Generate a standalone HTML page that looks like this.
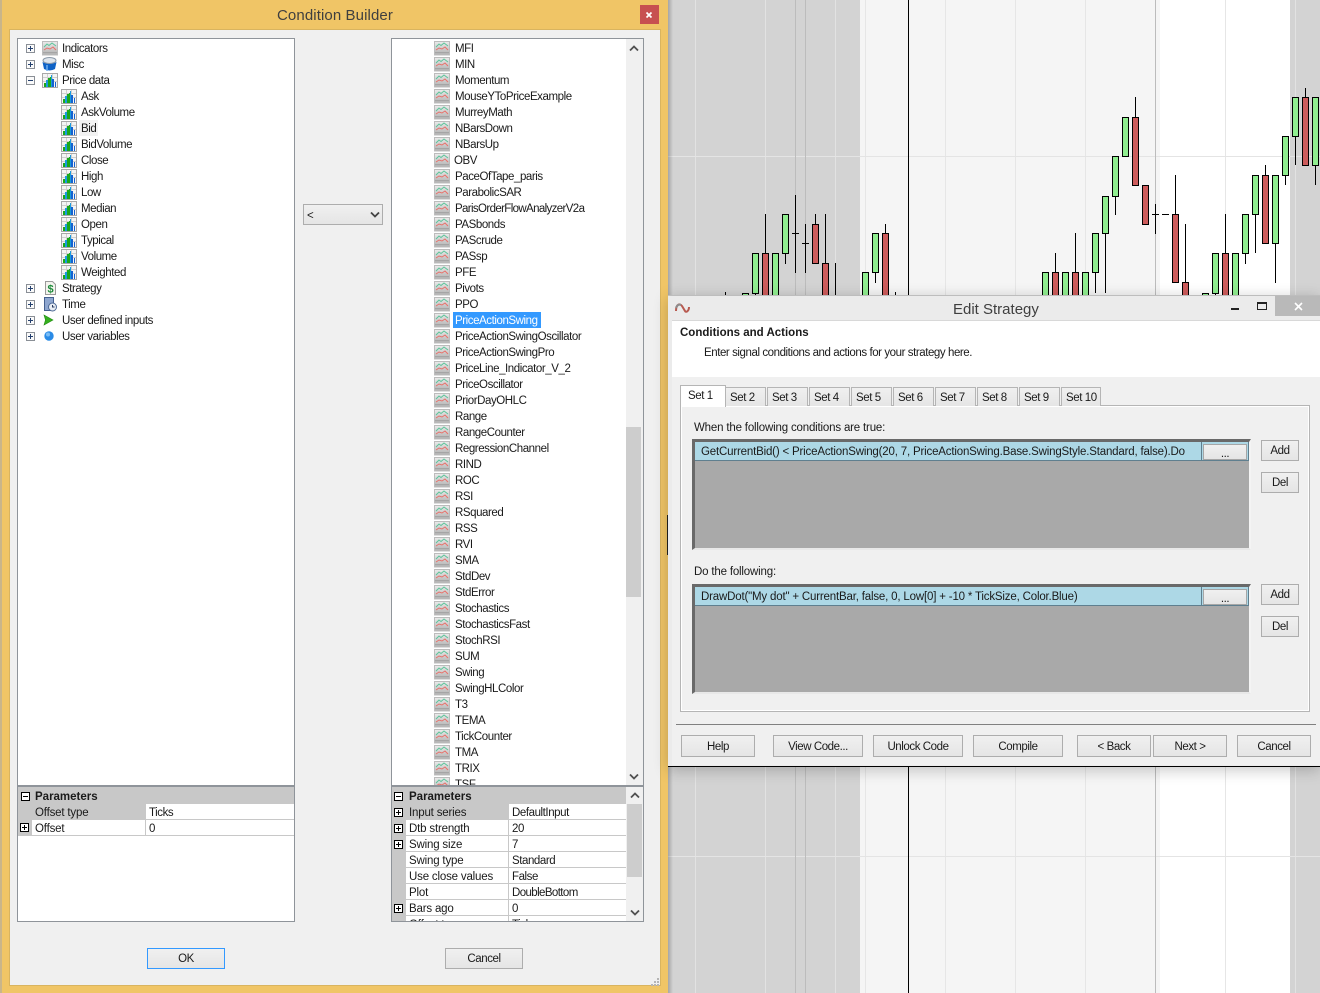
<!DOCTYPE html>
<html><head><meta charset="utf-8"><title>Condition Builder</title>
<style>
html,body{margin:0;padding:0;width:1320px;height:993px;overflow:hidden;background:#f5f5f5}
*{box-sizing:border-box}
body{font:11.5px/16px "Liberation Sans",sans-serif;letter-spacing:-.43px;color:#1a1a1a;position:relative}
.a{position:absolute}
.t{position:absolute;white-space:nowrap;line-height:16px;height:16px;margin-top:1px}
.p{letter-spacing:-.18px}
.box{position:absolute;background:#fff;border:1px solid #8f949a}
.btn{position:absolute;border:1px solid #adadad;background:linear-gradient(#f0f0f0,#e5e5e5);text-align:center;line-height:23px;height:22px}
.btn.s{line-height:20px}
.tab{position:absolute;top:387px;height:19px;width:41px;border:1px solid #b5b5b5;border-bottom:0;background:linear-gradient(#f0f0f0,#e5e5e5);text-align:left;padding-left:4px;line-height:20px}
.gutter{position:absolute;background:#c8c8c8}
.b{font-weight:700;letter-spacing:0}
.l{position:absolute;background:#c8c8c8}
.sb{position:absolute;background:#f0f0f0}
svg{position:absolute;display:block;overflow:visible}
.sunk{position:absolute;background:#a9a9a9;border-top:3px solid #696969;border-left:3px solid #696969;border-right:2px solid #f4f4f4;border-bottom:2px solid #e8e8e8}
.crow{position:absolute;left:695px;width:554px;background:#add8e6;border-bottom:1px solid #5f7f8f;border-right:1px solid #5f7f8f}
.dots{position:absolute;left:1203px;width:44px;height:16px;border:1px solid #a6a6a6;background:linear-gradient(#f0f0f0,#e5e5e5);text-align:center;line-height:19px}
</style></head>
<body>
<svg width="0" height="0" style="position:absolute">
<defs>
<symbol id="plus" viewBox="0 0 9 9"><rect x=".5" y=".5" width="8" height="8" fill="#fafafa" stroke="#8a8f96"/><path d="M2 4.5h5M4.5 2v5" stroke="#24406e"/></symbol>
<symbol id="minus" viewBox="0 0 9 9"><rect x=".5" y=".5" width="8" height="8" fill="#fafafa" stroke="#8a8f96"/><path d="M2 4.5h5" stroke="#24406e"/></symbol>
<symbol id="bp" viewBox="0 0 9 9"><rect x=".5" y=".5" width="8" height="8" fill="#fff" stroke="#000"/><path d="M2 4.5h5M4.5 2v5" stroke="#000"/></symbol>
<symbol id="bm" viewBox="0 0 9 9"><rect x=".5" y=".5" width="8" height="8" fill="#fff" stroke="#000"/><path d="M2 4.5h5" stroke="#000"/></symbol>
<linearGradient id="ig" x1="0" y1="0" x2="0" y2="1"><stop offset="0" stop-color="#ececec"/><stop offset="1" stop-color="#b0b0b0"/></linearGradient>
<g id="ind"><rect x=".5" y="1.5" width="15" height="13.5" fill="url(#ig)" stroke="#bcbcbc"/><path d="M1 12.5h14" stroke="#a5a5a5"/><path d="M2 7l3-3 2 1.5 3-2.5 4 3" fill="none" stroke="#5cc49a"/><path d="M2 10l3-2 3 1 3-2 3 3" fill="none" stroke="#e8706a"/></g>
<g id="pri"><rect x=".5" y="1.5" width="15" height="14" fill="#f4f4f4" stroke="#a8a8a8"/><path d="M1 5.5h14M1 9.5h14M5.5 2v13M10.5 2v13" stroke="#cfcfcf"/><path d="M2 15v-4h2v4zM6 15V6h2v9z" fill="#1aa81a"/><path d="M4 15V8h2v7zM9 15V3h1v12z" fill="#1a9ae0"/><path d="M8 15V5h1v10z" fill="#1aa81a"/><path d="M10 15V7h2v8zM13 15v-5h1v5z" fill="#1662d0"/></g>
<pattern id="pind" x="0" y="0" width="16" height="16" patternUnits="userSpaceOnUse"><use href="#ind"/></pattern>
<pattern id="ppri" x="0" y="0" width="16" height="16" patternUnits="userSpaceOnUse"><use href="#pri"/></pattern>
</defs>
</svg>

<!-- CHART -->
<div class="a" style="left:668px;top:0;width:652px;height:993px;background:#f5f5f5"></div>
<svg style="left:0;top:0" width="1320" height="993" shape-rendering="crispEdges">
<rect x="668" y="0" width="192" height="993" fill="#d3d3d3"/>
<rect x="1160" y="0" width="130" height="993" fill="#fff"/>
<rect x="1290" y="0" width="30" height="993" fill="#d3d3d3"/>
<path d="M695.5 0V993M765.5 0V993M835.5 0V993M1295.5 0V993" stroke="#e2e2e2"/>
<path d="M865.5 0V993M945.5 0V993M1015.5 0V993M1085.5 0V993M1225.5 0V993" stroke="#e6e6e6"/>
<path d="M668 156.5H1320M668 856.5H1320" stroke="#e4e4e4"/>
<path d="M795.5 0V993M805.5 0V993M1155.5 0V993" stroke="#bcbcbc"/>
<path d="M908.5 0V993" stroke="#000"/>
<path stroke="#000" fill="none" d="M725.5 292V300M755.5 293V296M765.5 214V253M785.5 253V264M795.5 195V273M792 233.5H799M805.5 224V273M802 243.5H809M815.5 214V224M825.5 214V263M835.5 263V300M875.5 272V283M885.5 224V233M895.5 292V300M1055.5 253V272M1075.5 233V272M1095.5 272V293M1105.5 233V293M1115.5 196V215M1135.5 97V117M1155.5 204V234M1152 214.5H1159M1162 214.5H1169M1175.5 175V214M1185.5 224V282M1215.5 293V296M1225.5 214V253M1245.5 253V264M1255.5 214V253M1265.5 165V175M1275.5 243V283M1285.5 175V185M1295.5 136V165M1305.5 88V97M1315.5 165V185"/>
<g fill="#90ee90" stroke="#000">
<rect x="742.5" y="293.5" width="6" height="7"/><rect x="752.5" y="253.5" width="6" height="40"/><rect x="772.5" y="253.5" width="6" height="47"/><rect x="782.5" y="214.5" width="6" height="39"/><rect x="862.5" y="272.5" width="6" height="28"/><rect x="872.5" y="233.5" width="6" height="39"/><rect x="1042.5" y="272.5" width="6" height="28"/><rect x="1062.5" y="272.5" width="6" height="28"/><rect x="1082.5" y="272.5" width="6" height="28"/><rect x="1092.5" y="233.5" width="6" height="39"/><rect x="1102.5" y="196.5" width="6" height="37"/><rect x="1112.5" y="156.5" width="6" height="40"/><rect x="1122.5" y="117.5" width="6" height="39"/><rect x="1202.5" y="293.5" width="6" height="7"/><rect x="1212.5" y="253.5" width="6" height="40"/><rect x="1232.5" y="253.5" width="6" height="47"/><rect x="1242.5" y="214.5" width="6" height="39"/><rect x="1252.5" y="175.5" width="6" height="39"/><rect x="1272.5" y="175.5" width="6" height="68"/><rect x="1282.5" y="136.5" width="6" height="39"/><rect x="1292.5" y="97.5" width="6" height="39"/><rect x="1312.5" y="97.5" width="6" height="68"/>
</g>
<g fill="#cd5c5c" stroke="#000">
<rect x="762.5" y="253.5" width="6" height="47"/><rect x="812.5" y="224.5" width="6" height="39"/><rect x="822.5" y="263.5" width="6" height="37"/><rect x="882.5" y="233.5" width="6" height="67"/><rect x="1052.5" y="272.5" width="6" height="28"/><rect x="1072.5" y="272.5" width="6" height="28"/><rect x="1132.5" y="117.5" width="6" height="68"/><rect x="1142.5" y="185.5" width="6" height="39"/><rect x="1172.5" y="214.5" width="6" height="68"/><rect x="1182.5" y="282.5" width="6" height="18"/><rect x="1222.5" y="253.5" width="6" height="47"/><rect x="1262.5" y="175.5" width="6" height="68"/><rect x="1302.5" y="97.5" width="6" height="68"/>
</g>
</svg>
<div class="a" style="left:668px;top:0;width:5px;height:993px;background:linear-gradient(90deg,rgba(0,0,0,.22),rgba(0,0,0,0))"></div>

<!-- CONDITION BUILDER -->
<div class="a" style="left:0;top:0;width:668px;height:993px;background:#f0c566;border-left:2px solid #c9b58a"></div>
<div class="a" style="left:9px;top:29px;width:652px;height:957px;background:#f0f0f0;border:1px solid #d9b45f"></div>
<div class="t" style="left:277px;top:6px;font-size:15px;letter-spacing:.1px;color:#3f3f3f;height:18px;line-height:18px">Condition Builder</div>
<div class="a" style="left:640px;top:5px;width:19px;height:19px;background:#c75050"></div>
<svg style="left:646px;top:12px" width="6" height="6"><path d="M.5.5l5 5M5.5 .5l-5 5" stroke="#fff" stroke-width="1.7"/></svg>

<!-- left tree -->
<div class="box" style="left:17px;top:38px;width:278px;height:884px"></div>
<svg style="left:26px;top:44px" width="9" height="9"><use href="#plus"/></svg>
<svg style="left:26px;top:60px" width="9" height="9"><use href="#plus"/></svg>
<svg style="left:26px;top:76px" width="9" height="9"><use href="#minus"/></svg>
<svg style="left:26px;top:284px" width="9" height="9"><use href="#plus"/></svg>
<svg style="left:26px;top:300px" width="9" height="9"><use href="#plus"/></svg>
<svg style="left:26px;top:316px" width="9" height="9"><use href="#plus"/></svg>
<svg style="left:26px;top:332px" width="9" height="9"><use href="#plus"/></svg>
<svg style="left:42px;top:40px" width="16" height="16"><use href="#ind"/></svg>
<svg style="left:42px;top:56px" width="16" height="16"><ellipse cx="7.5" cy="4.5" rx="6.5" ry="3" fill="#dfe5ec" stroke="#8a98a8"/><path d="M.5 6l1.5 7q5.500 3 11 0l1.500-7q-7 4-14 0z" fill="#0f62c6"/><path d="M5 9v6" stroke="#6fb0f0" stroke-width="1.500"/></svg>
<svg style="left:42px;top:72px" width="16" height="16"><use href="#pri"/></svg>
<svg style="left:61px;top:88px" width="16" height="192"><rect width="16" height="192" fill="url(#ppri)"/></svg>
<div class="t" style="left:62px;top:40px">Indicators</div>
<div class="t" style="left:62px;top:56px">Misc</div>
<div class="t" style="left:62px;top:72px">Price data</div>
<div class="t" style="left:81px;top:88px">Ask</div>
<div class="t" style="left:81px;top:104px">AskVolume</div>
<div class="a" style="left:79px;top:120px;width:19px;height:16px;background:#f2f2f2"></div>
<div class="t" style="left:81px;top:120px">Bid</div>
<div class="t" style="left:81px;top:136px">BidVolume</div>
<div class="t" style="left:81px;top:152px">Close</div>
<div class="t" style="left:81px;top:168px">High</div>
<div class="t" style="left:81px;top:184px">Low</div>
<div class="t" style="left:81px;top:200px">Median</div>
<div class="t" style="left:81px;top:216px">Open</div>
<div class="t" style="left:81px;top:232px">Typical</div>
<div class="t" style="left:81px;top:248px">Volume</div>
<div class="t" style="left:81px;top:264px">Weighted</div>
<svg style="left:42px;top:280px" width="16" height="16"><path d="M3.5 1.500h7l3 3v10h-10z" fill="#f4f4ee" stroke="#9a9a9a"/><text x="8.500" y="12.500" text-anchor="middle" font-family="Liberation Sans" font-size="11" font-weight="700" fill="#1d8a3a" letter-spacing="0">$</text></svg>
<div class="t" style="left:62px;top:280px">Strategy</div>
<svg style="left:42px;top:296px" width="16" height="16"><path d="M2.500 1.500h9v13h-9z" fill="#8ea6cf" stroke="#46608f"/><circle cx="10.500" cy="11" r="4" fill="#e8edf4" stroke="#4f6a96"/><path d="M10.500 9v2h2" stroke="#2a3c60" fill="none"/></svg>
<div class="t" style="left:62px;top:296px">Time</div>
<svg style="left:42px;top:312px" width="16" height="16"><path d="M2 3l9 5-9 5 1.500-5z" fill="#35b01e" stroke="#1f8a10" stroke-width=".6"/></svg>
<div class="t" style="left:62px;top:312px">User defined inputs</div>
<svg style="left:42px;top:328px" width="16" height="16"><circle cx="7" cy="8" r="4.700" fill="#2a8be6"/><circle cx="6" cy="6.500" r="2" fill="#79bdf6"/></svg>
<div class="t" style="left:62px;top:328px">User variables</div>

<!-- left params -->
<div class="a" style="left:18px;top:785px;width:276px;height:2px;background:#8f949a"></div>
<div class="gutter" style="left:18px;top:787px;width:276px;height:17px"></div>
<svg style="left:21px;top:792px" width="9" height="9"><use href="#bm"/></svg>
<div class="t b" style="left:35px;top:788px">Parameters</div>
<div class="gutter" style="left:18px;top:804px;width:127px;height:16px"></div>
<div class="gutter" style="left:18px;top:820px;width:14px;height:16px"></div>
<div class="l" style="left:18px;top:819px;width:276px;height:1px"></div>
<div class="l" style="left:18px;top:835px;width:276px;height:1px"></div>
<div class="l" style="left:145px;top:804px;width:1px;height:32px"></div>
<svg style="left:20px;top:823px" width="9" height="9"><use href="#bp"/></svg>
<div class="t p" style="left:35px;top:804px">Offset type</div>
<div class="t" style="left:149px;top:804px">Ticks</div>
<div class="t p" style="left:35px;top:820px">Offset</div>
<div class="t" style="left:149px;top:820px">0</div>

<!-- combo -->
<div class="btn" style="left:303px;top:204px;width:80px;height:21px"></div>
<div class="t" style="left:307px;top:207px">&lt;</div>
<svg style="left:370px;top:211px" width="10" height="8"><path d="M1 1.500l4 4 4-4" fill="none" stroke="#444" stroke-width="1.800"/></svg>

<!-- right list -->
<div class="box" style="left:391px;top:38px;width:253px;height:884px"></div>
<div class="a" style="left:392px;top:39px;width:234px;height:746px;overflow:hidden">
<svg style="left:42px;top:1px" width="16" height="752"><rect width="16" height="752" fill="url(#pind)"/></svg>
<div class="a" style="left:61px;top:273px;width:88px;height:16px;background:#3399ff"></div>
<div class="t" style="left:63px;top:1px">MFI</div>
<div class="t" style="left:63px;top:17px">MIN</div>
<div class="t" style="left:63px;top:33px">Momentum</div>
<div class="t" style="left:63px;top:49px">MouseYToPriceExample</div>
<div class="t" style="left:63px;top:65px">MurreyMath</div>
<div class="t" style="left:63px;top:81px">NBarsDown</div>
<div class="t" style="left:63px;top:97px">NBarsUp</div>
<div class="t" style="left:62px;top:113px">OBV</div>
<div class="t" style="left:63px;top:129px">PaceOfTape_paris</div>
<div class="t" style="left:63px;top:145px">ParabolicSAR</div>
<div class="t" style="left:63px;top:161px;letter-spacing:-.63px">ParisOrderFlowAnalyzerV2a</div>
<div class="t" style="left:63px;top:177px">PASbonds</div>
<div class="t" style="left:63px;top:193px">PAScrude</div>
<div class="t" style="left:63px;top:209px">PASsp</div>
<div class="t" style="left:63px;top:225px">PFE</div>
<div class="t" style="left:63px;top:241px">Pivots</div>
<div class="t" style="left:63px;top:257px">PPO</div>
<div class="t" style="left:63px;top:273px;color:#fff">PriceActionSwing</div>
<div class="t" style="left:63px;top:289px">PriceActionSwingOscillator</div>
<div class="t" style="left:63px;top:305px">PriceActionSwingPro</div>
<div class="t" style="left:63px;top:321px">PriceLine_Indicator_V_2</div>
<div class="t" style="left:63px;top:337px">PriceOscillator</div>
<div class="t" style="left:63px;top:353px">PriorDayOHLC</div>
<div class="t" style="left:63px;top:369px">Range</div>
<div class="t" style="left:63px;top:385px">RangeCounter</div>
<div class="t" style="left:63px;top:401px">RegressionChannel</div>
<div class="t" style="left:63px;top:417px">RIND</div>
<div class="t" style="left:63px;top:433px">ROC</div>
<div class="t" style="left:63px;top:449px">RSI</div>
<div class="t" style="left:63px;top:465px">RSquared</div>
<div class="t" style="left:63px;top:481px">RSS</div>
<div class="t" style="left:63px;top:497px">RVI</div>
<div class="t" style="left:63px;top:513px">SMA</div>
<div class="t" style="left:63px;top:529px">StdDev</div>
<div class="t" style="left:63px;top:545px">StdError</div>
<div class="t" style="left:63px;top:561px">Stochastics</div>
<div class="t" style="left:63px;top:577px">StochasticsFast</div>
<div class="t" style="left:63px;top:593px">StochRSI</div>
<div class="t" style="left:63px;top:609px">SUM</div>
<div class="t" style="left:63px;top:625px">Swing</div>
<div class="t" style="left:63px;top:641px">SwingHLColor</div>
<div class="t" style="left:63px;top:657px">T3</div>
<div class="t" style="left:63px;top:673px">TEMA</div>
<div class="t" style="left:63px;top:689px">TickCounter</div>
<div class="t" style="left:63px;top:705px">TMA</div>
<div class="t" style="left:63px;top:721px">TRIX</div>
<div class="t" style="left:63px;top:737px">TSF</div>
</div>
<div class="sb" style="left:626px;top:39px;width:17px;height:746px"></div>
<div class="a" style="left:626px;top:427px;width:15px;height:170px;background:#cdcdcd"></div>
<svg style="left:629px;top:45px" width="10" height="7"><path d="M1 5.500l4-4 4 4" fill="none" stroke="#505050" stroke-width="1.800"/></svg>
<svg style="left:629px;top:773px" width="10" height="7"><path d="M1 1.500l4 4 4-4" fill="none" stroke="#505050" stroke-width="1.800"/></svg>

<!-- right params -->
<div class="a" style="left:392px;top:785px;width:251px;height:2px;background:#8f949a"></div>
<div class="a" style="left:392px;top:787px;width:251px;height:134px;overflow:hidden">
<div class="gutter" style="left:0;top:0;width:234px;height:17px"></div>
<div class="gutter" style="left:0;top:17px;width:14px;height:120px"></div>
<div class="gutter" style="left:0;top:17px;width:116px;height:16px"></div>
<div class="l" style="left:14px;top:32px;width:220px;height:1px"></div>
<div class="l" style="left:14px;top:48px;width:220px;height:1px"></div>
<div class="l" style="left:14px;top:64px;width:220px;height:1px"></div>
<div class="l" style="left:14px;top:80px;width:220px;height:1px"></div>
<div class="l" style="left:14px;top:96px;width:220px;height:1px"></div>
<div class="l" style="left:14px;top:112px;width:220px;height:1px"></div>
<div class="l" style="left:14px;top:128px;width:220px;height:1px"></div>
<div class="l" style="left:116px;top:17px;width:1px;height:120px"></div>
<svg style="left:2px;top:5px" width="9" height="9"><use href="#bm"/></svg>
<div class="t b" style="left:17px;top:1px">Parameters</div>
<svg style="left:2px;top:21px" width="9" height="9"><use href="#bp"/></svg>
<svg style="left:2px;top:37px" width="9" height="9"><use href="#bp"/></svg>
<svg style="left:2px;top:53px" width="9" height="9"><use href="#bp"/></svg>
<svg style="left:2px;top:117px" width="9" height="9"><use href="#bp"/></svg>
<div class="t p" style="left:17px;top:17px">Input series</div><div class="t" style="left:120px;top:17px">DefaultInput</div>
<div class="t p" style="left:17px;top:33px">Dtb strength</div><div class="t" style="left:120px;top:33px">20</div>
<div class="t p" style="left:17px;top:49px">Swing size</div><div class="t" style="left:120px;top:49px">7</div>
<div class="t p" style="left:17px;top:65px">Swing type</div><div class="t" style="left:120px;top:65px">Standard</div>
<div class="t p" style="left:17px;top:81px">Use close values</div><div class="t" style="left:120px;top:81px">False</div>
<div class="t p" style="left:17px;top:97px">Plot</div><div class="t" style="left:120px;top:97px;letter-spacing:-.6px">DoubleBottom</div>
<div class="t p" style="left:17px;top:113px">Bars ago</div><div class="t" style="left:120px;top:113px">0</div>
<div class="t p" style="left:17px;top:129px">Offset type</div><div class="t" style="left:120px;top:129px">Ticks</div>
<div class="sb" style="left:234px;top:0;width:17px;height:134px"></div>
<div class="a" style="left:235px;top:17px;width:15px;height:73px;background:#cdcdcd"></div>
<svg style="left:238px;top:5px" width="10" height="7"><path d="M1 5.500l4-4 4 4" fill="none" stroke="#505050" stroke-width="1.800"/></svg>
<svg style="left:238px;top:122px" width="10" height="7"><path d="M1 1.500l4 4 4-4" fill="none" stroke="#505050" stroke-width="1.800"/></svg>
</div>

<div class="btn s" style="left:147px;top:948px;width:78px;height:21px;border-color:#3399ff">OK</div>
<div class="btn s" style="left:445px;top:948px;width:78px;height:21px">Cancel</div>
<svg style="left:650px;top:977px" width="10" height="10" fill="#b5b5b5"><rect x="7" y="1" width="2" height="2"/><rect x="4" y="4" width="2" height="2"/><rect x="7" y="4" width="2" height="2"/><rect x="1" y="7" width="2" height="2"/><rect x="4" y="7" width="2" height="2"/><rect x="7" y="7" width="2" height="2"/></svg>
<div class="a" style="left:667px;top:515px;width:2px;height:40px;background:#222"></div>

<!-- EDIT STRATEGY -->
<div class="a" style="left:668px;top:295px;width:652px;height:472px;background:#ebebeb;border-top:1px solid #bdbdbd;border-bottom:1px solid #000;box-shadow:0 3px 14px rgba(0,0,0,.22)"></div>
<div class="a" style="left:672px;top:320px;width:648px;height:1px;background:#d8d8d8"></div>
<div class="a" style="left:672px;top:321px;width:648px;height:56px;background:#fff"></div>
<div class="a" style="left:672px;top:377px;width:648px;height:388px;background:#f0f0f0"></div>
<svg style="left:675px;top:302px" width="15" height="12" fill="none"><path d="M1 9C1 2 5 1 7 4l3 5c1 2 4 0 4-4" stroke="#b85a50" stroke-width="2"/><path d="M1 6c1-3 3-4 5-3" stroke="#8c8c8c" stroke-width="2"/></svg>
<div class="t" style="left:953px;top:300px;font-size:15px;letter-spacing:0;color:#3f3f3f;height:18px;line-height:18px">Edit Strategy</div>
<div class="a" style="left:1231px;top:308px;width:8px;height:2px;background:#222"></div>
<div class="a" style="left:1257px;top:302px;width:10px;height:8px;border:1px solid #222;border-top-width:2px"></div>
<div class="a" style="left:1275px;top:296px;width:45px;height:20px;background:#b9b9b9"></div>
<svg style="left:1294px;top:302px" width="9" height="9"><path d="M1 1l7 7M8 1L1 8" stroke="#fff" stroke-width="1.600"/></svg>
<div class="t b" style="left:680px;top:324px">Conditions and Actions</div>
<div class="t" style="left:704px;top:344px">Enter signal conditions and actions for your strategy here.</div>

<!-- tabs -->
<div class="a" style="left:680px;top:405px;width:630px;height:307px;border:1px solid #b5b5b5;background:#f0f0f0;box-shadow:inset 1px 1px 0 #fff,inset -1px -1px 0 #fff"></div>
<div class="tab" style="left:725px">Set 2</div>
<div class="tab" style="left:767px">Set 3</div>
<div class="tab" style="left:809px">Set 4</div>
<div class="tab" style="left:851px">Set 5</div>
<div class="tab" style="left:893px">Set 6</div>
<div class="tab" style="left:935px">Set 7</div>
<div class="tab" style="left:977px">Set 8</div>
<div class="tab" style="left:1019px">Set 9</div>
<div class="tab" style="left:1061px;width:40px">Set 10</div>
<div class="a" style="left:680px;top:385px;width:46px;height:22px;background:#fff;border:1px solid #b5b5b5;border-bottom:0;padding-left:7px;line-height:20px">Set 1</div>

<div class="t p" style="left:694px;top:419px">When the following conditions are true:</div>
<div class="sunk" style="left:692px;top:439px;width:559px;height:111px"></div>
<div class="crow" style="top:442px;height:19px"></div>
<div class="t p" style="left:701px;top:443px">GetCurrentBid() &lt; PriceActionSwing(20, 7, PriceActionSwing.Base.SwingStyle.Standard, false).Do</div>
<div class="a" style="left:1201px;top:442px;width:1px;height:19px;background:#5f7f8f"></div>
<div class="dots" style="top:444px">...</div>
<div class="btn s" style="left:1261px;top:440px;width:38px;height:21px">Add</div>
<div class="btn s" style="left:1261px;top:472px;width:38px;height:21px">Del</div>

<div class="t p" style="left:694px;top:563px">Do the following:</div>
<div class="sunk" style="left:692px;top:584px;width:559px;height:110px"></div>
<div class="crow" style="top:587px;height:19px"></div>
<div class="t p" style="left:701px;top:588px">DrawDot("My dot" + CurrentBar, false, 0, Low[0] + -10 * TickSize, Color.Blue)</div>
<div class="a" style="left:1201px;top:587px;width:1px;height:19px;background:#5f7f8f"></div>
<div class="dots" style="top:589px">...</div>
<div class="btn s" style="left:1261px;top:584px;width:38px;height:21px">Add</div>
<div class="btn s" style="left:1261px;top:616px;width:38px;height:21px">Del</div>

<div class="a" style="left:676px;top:724px;width:640px;height:1px;background:#808080"></div>
<div class="btn" style="left:681px;top:735px;width:74px">Help</div>
<div class="btn" style="left:773px;top:735px;width:90px">View Code...</div>
<div class="btn" style="left:873px;top:735px;width:90px">Unlock Code</div>
<div class="btn" style="left:973px;top:735px;width:90px">Compile</div>
<div class="btn" style="left:1077px;top:735px;width:74px">&lt; Back</div>
<div class="btn" style="left:1153px;top:735px;width:74px">Next &gt;</div>
<div class="btn" style="left:1237px;top:735px;width:74px">Cancel</div>
</body></html>
